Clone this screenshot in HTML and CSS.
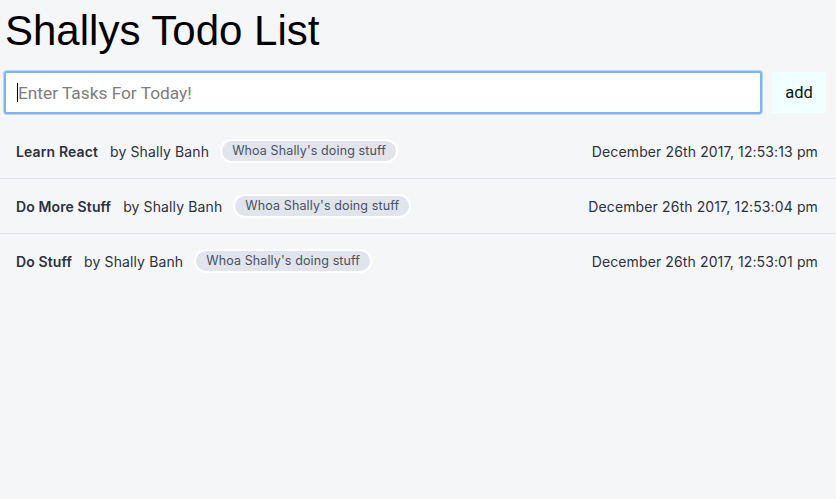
FILE: index.html
```html
<!DOCTYPE html>
<html>
<head>
<meta charset="utf-8">
<link rel="stylesheet" href="styles.css">
</head>
<body>
<h1 class="title">Shallys Todo List</h1>
<form class="task-form">
  <div class="task-input"><span class="caret"></span><span class="placeholder">Enter Tasks For Today!</span></div>
  <button class="add-btn" type="button">add</button>
</form>
<ul class="todo-list">
  <li class="todo-row">
    <span class="todo-name">Learn React</span>
    <span class="todo-by">by Shally Banh</span>
    <span class="todo-tag">Whoa Shally's doing stuff</span>
    <span class="todo-date">December 26th 2017, 12:53:13 pm</span>
  </li>
  <li class="todo-row">
    <span class="todo-name">Do More Stuff</span>
    <span class="todo-by">by Shally Banh</span>
    <span class="todo-tag">Whoa Shally's doing stuff</span>
    <span class="todo-date">December 26th 2017, 12:53:04 pm</span>
  </li>
  <li class="todo-row">
    <span class="todo-name">Do Stuff</span>
    <span class="todo-by">by Shally Banh</span>
    <span class="todo-tag">Whoa Shally's doing stuff</span>
    <span class="todo-date">December 26th 2017, 12:53:01 pm</span>
  </li>
</ul>
</body>
</html>
```
FILE: styles.css
```css
html, body {
  margin: 0;
  padding: 0;
  background: #f5f6f8;
}
body {
  font-family: Inter, "Noto Sans", sans-serif;
  color: #2c313c;
}
.title {
  margin: 7px 0 0 5px;
  font-family: "Liberation Sans", Arial, sans-serif;
  font-weight: 400;
  font-size: 42px;
  line-height: 48px;
  color: #000;
}
.task-form {
  display: flex;
  align-items: center;
  gap: 10px;
  margin: 16px 0 0 4px;
}
.task-input {
  box-sizing: border-box;
  width: 758px;
  height: 43px;
  background: #fff;
  border: 2px solid #7db4f8;
  border-radius: 3px;
  box-shadow: 0 0 0 1px #b6d5fb;
  display: flex;
  align-items: center;
  padding-left: 11px;
}
.caret {
  width: 1px;
  height: 19px;
  background: #000;
}
.placeholder {
  font-family: Roboto, "Noto Sans", sans-serif;
  font-size: 17.3px;
  color: #7d7d7d;
}
.add-btn {
  width: 54px;
  height: 41px;
  border: none;
  background: #f0ffff;
  font-family: Roboto, "Noto Sans", sans-serif;
  font-size: 16.5px;
  color: #111;
  padding: 0;
}
.todo-list {
  list-style: none;
  margin: 10px 0 0 0;
  padding: 0;
}
.todo-row {
  height: 54px;
  display: flex;
  align-items: center;
  padding: 0 18px 0 16px;
  border-bottom: 1px solid #e0e2ea;
  font-size: 14px;
  letter-spacing: 0.12px;
}
.todo-row:last-child {
  border-bottom: none;
}
.todo-name {
  font-weight: 600;
  margin-right: 12px;
}
.todo-by {
  margin-right: 11px;
}
.todo-tag {
  background: #e1e4eb;
  border: 2px solid #fff;
  border-radius: 12px;
  padding: 3px 10px;
  font-size: 12.5px;
  line-height: 14px;
  color: #4b5162;
}
.todo-date {
  margin-left: auto;
}
```
